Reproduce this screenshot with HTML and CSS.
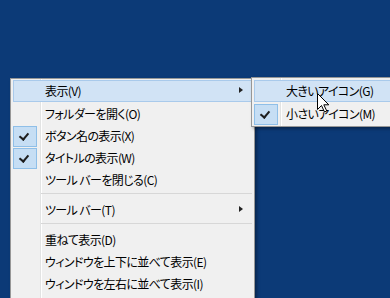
FILE: index.html
```html
<!DOCTYPE html>
<html lang="ja">
<head>
  <meta charset="UTF-8">
  <title>タスクバー メニュー</title>
  <link rel="stylesheet" href="styles.css">
</head>
<body>
  <div class="desktop">

    <!-- メインのコンテキストメニュー -->
    <ul class="menu main-menu">
      <li class="item active has-sub">表示(V)</li>
      <li class="item">フォルダーを開く(O)</li>
      <li class="item checked">ボタン名の表示(X)</li>
      <li class="item checked">タイトルの表示(W)</li>
      <li class="item">ツール バーを閉じる(C)</li>
      <li class="separator"></li>
      <li class="item has-sub">ツール バー(T)</li>
      <li class="separator"></li>
      <li class="item">重ねて表示(D)</li>
      <li class="item">ウィンドウを上下に並べて表示(E)</li>
      <li class="item">ウィンドウを左右に並べて表示(I)</li>
      <li class="item">デスクトップを表示(S)</li>
    </ul>

    <!-- サブメニュー -->
    <ul class="menu sub-menu">
      <li class="item active">大きいアイコン(G)</li>
      <li class="item checked">小さいアイコン(M)</li>
    </ul>

    <!-- マウスカーソル -->
    <svg class="cursor" width="13" height="20" viewBox="0 0 13 20">
      <path d="M0.5 0.5 L0.5 16.5 L4.5 12.5 L7.5 19 L9.8 18 L6.8 11.8 L11.8 11.8 Z" fill="#fff" stroke="#000" stroke-width="1"/>
    </svg>
  </div>
</body>
</html>
```

FILE: styles.css
```css
* {
  margin: 0;
  padding: 0;
  box-sizing: border-box;
}

body {
  background-color: #0c3a77;
  overflow: hidden;
  font-family: "Noto Sans CJK JP", "Noto Sans", sans-serif;
  font-size: 12px;
  font-feature-settings: "palt";
  letter-spacing: -0.6px;
  color: #000;
}

.desktop {
  position: relative;
  width: 390px;
  height: 298px;
  overflow: hidden;
}

.menu {
  position: absolute;
  list-style: none;
  border: 1px solid #979797;
  background:
    linear-gradient(to right, transparent 29px, #e2e3e3 29px, #e2e3e3 30px, #fff 30px, #fff 31px, transparent 31px),
    #f0f0f0;
  box-shadow: 2px 2px 3px rgba(0, 0, 0, 0.35);
}

.main-menu {
  left: 10px;
  top: 78px;
  width: 245px;
  padding: 1px 2px 4px;
}

.sub-menu {
  left: 251px;
  top: 77px;
  width: 150px;
  padding: 2px;
  background:
    linear-gradient(to right, transparent 28px, #e2e3e3 28px, #e2e3e3 29px, #fff 29px, #fff 30px, transparent 30px),
    #f0f0f0;
}

.item {
  position: relative;
  height: 22px;
  line-height: 22px;
  padding-left: 31px;
  border: 1px solid transparent;
  white-space: nowrap;
}

.item.active {
  background-color: #d1e3f5;
  border-color: #a9caeb;
  line-height: 20px;
}

.item.checked::before {
  content: "";
  position: absolute;
  left: -1px;
  top: 1px;
  width: 22px;
  height: 19px;
  background-color: #c6def4;
  border: 1px solid #8fbfe8;
}

.item.checked::after {
  content: "";
  position: absolute;
  left: 7px;
  top: 6px;
  width: 4px;
  height: 7px;
  border: solid #1e1e1e;
  border-width: 0 2px 2px 0;
  transform: rotate(40deg);
}

.item.has-sub::after {
  content: "";
  position: absolute;
  right: 8px;
  top: 7px;
  border-style: solid;
  border-width: 3.5px 0 3.5px 4px;
  border-color: transparent transparent transparent #222;
}

.item.active.has-sub::after {
  top: 6px;
}

.separator {
  height: 8px;
  margin-left: 28px;
  padding-top: 3px;
}

.separator::before {
  content: "";
  display: block;
  height: 1px;
  background-color: #d7d7d7;
}

.cursor {
  position: absolute;
  left: 317px;
  top: 93px;
}
```
